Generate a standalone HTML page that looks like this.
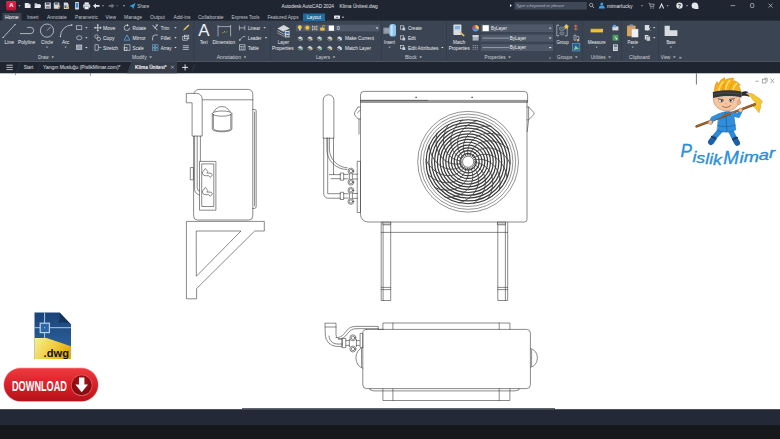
<!DOCTYPE html>
<html lang="tr"><head><meta charset="utf-8"><title>Klima Ünitesi.dwg - Autodesk AutoCAD 2024</title>
<style>html,body{margin:0;padding:0;background:#fff;overflow:hidden}svg{display:block}</style></head>
<body>
<svg width="780" height="439" viewBox="0 0 780 439" font-family="Liberation Sans, Arial, sans-serif">
<rect width="780" height="439" fill="#ffffff"/>
<rect x="0" y="0" width="780" height="21" fill="#1f2531"/>
<rect x="0" y="20.6" width="780" height="40.700" fill="#3b4453"/>
<rect x="0" y="61.300" width="780" height="12" fill="#1f2531"/>
<rect x="2.5" y="13" width="19" height="8" fill="#3b4453"/>
<rect x="303" y="13.5" width="22" height="7.500" fill="#1d6ba3"/>
<defs><linearGradient id="ga" x1="0" y1="0" x2="0" y2="1"><stop offset="0" stop-color="#e0244c"/><stop offset="0.7" stop-color="#cf173f"/><stop offset="1" stop-color="#8e1533"/></linearGradient></defs>
<rect x="6.2" y="1" width="9.800" height="9.800" rx="1" fill="url(#ga)"/>
<text x="11.3" y="7.3" font-size="6" fill="#ffffff" text-anchor="middle" font-weight="bold">A</text>
<path d="M18.4 5.45h2.2l-1.1 1.1z" fill="#eceef1"/>
<path d="M24.8 3h3.6l2.2 1.6v3.4h-5.800z" fill="#e6e8ec"/><path d="M28.400 3v1.600h2.200" fill="none" stroke="#8a909a" stroke-width="0.3"/>
<path d="M34.600 3.200h2.200l0.600 0.800h3v4h-5.800z" fill="#c8ccd2"/><path d="M35.600 5h5.600l-1 3h-5.600z" fill="#e6e8ec"/>
<rect x="44.800" y="2.600" width="6" height="6.200" rx="0.500" fill="#d4d8de"/><rect x="46" y="2.600" width="3.600" height="2.200" fill="#5b6270"/><rect x="46" y="6" width="3.600" height="2.800" fill="#8a909a"/>
<rect x="53.800" y="2.600" width="5.600" height="6.200" rx="0.500" fill="#d4d8de"/><rect x="54.800" y="2.600" width="3.400" height="2" fill="#5b6270"/><path d="M57 8.800l3-3.400 0.800 0.700-3 3.400z" fill="#e39a3a"/>
<path d="M63.800 2.600h3.400l1.400 1.400v5h-4.800z" fill="#d4d8de"/><rect x="64.600" y="5.400" width="2" height="2.600" fill="#5b6270"/><rect x="66.400" y="6.800" width="2.600" height="2" fill="#e3b23a"/>
<rect x="75" y="2" width="4" height="7.400" rx="0.700" fill="#d4d8de"/><rect x="75.700" y="3" width="2.600" height="4.600" fill="#3a86c8"/>
<rect x="83.200" y="4.200" width="7" height="3.600" rx="0.800" fill="#d4d8de"/><rect x="84.600" y="2.400" width="4.200" height="2" fill="#eef0f3"/><rect x="84.600" y="6.600" width="4.200" height="2.600" fill="#eef0f3" stroke="#5b6270" stroke-width="0.300"/>
<path d="M93 5.8l3-2.4v1.6h3.6v1.8h-3.6v1.6z" fill="#e3e6ea"/>
<path d="M102 5.5h2l-1 1z" fill="#eceef1"/>
<path d="M114.5 5.8l-3-2.4v1.6h-2.8v1.8h2.8v1.6z" fill="#6d7480"/>
<path d="M116.3 5.5h2l-1 1z" fill="#8a909a"/>
<path d="M122.8 5.4h2.4l-1.2 1.2z" fill="#eceef1"/>
<path d="M129.3 6.2l6.2-3.2-2.2 6-1.3-2.2z" fill="#2ea3e6"/>
<text x="137.3" y="7.6" font-size="5.4" fill="#c9cdd3" textLength="12" lengthAdjust="spacingAndGlyphs">Share</text>
<text x="281.5" y="8.1" font-size="5.4" fill="#e3e6ea" textLength="52.5" lengthAdjust="spacingAndGlyphs">Autodesk AutoCAD 2024</text>
<text x="339.5" y="8.1" font-size="5.4" fill="#e3e6ea" textLength="38.3" lengthAdjust="spacingAndGlyphs">Klima Ünitesi.dwg</text>
<path d="M510 4l1.8 1.6-1.8 1.6z" fill="#e3e6ea"/>
<rect x="514.5" y="2" width="72.3" height="7.6" fill="#3f4857"/>
<text x="516" y="7.4" font-size="4.3" fill="#b9bec6" font-style="italic" textLength="48" lengthAdjust="spacingAndGlyphs">Type a keyword or phrase</text>
<circle cx="591.2" cy="5" r="1.7" fill="none" stroke="#d9dce1" stroke-width="0.6"/><path d="M592.4 6.2l1.6 1.8" stroke="#d9dce1" stroke-width="0.7"/>
<circle cx="601.8" cy="4" r="1.5" fill="#3aa0e8"/><path d="M598.8 8.6q0-3 3-3t3 3z" fill="#3aa0e8"/>
<text x="607" y="7.8" font-size="4.6" fill="#e3e6ea" textLength="25.6" lengthAdjust="spacingAndGlyphs">mimarlucky</text>
<path d="M641 5.5h2l-1 1z" fill="#eceef1"/>
<path d="M648.6 3.2h1l0.8 3.4h3.2l0.6-2.4h-4" fill="none" stroke="#d9dce1" stroke-width="0.6"/><circle cx="650.9" cy="8" r="0.55" fill="#d9dce1"/><circle cx="653.2" cy="8" r="0.55" fill="#d9dce1"/>
<path d="M659 8.4l2.6-5.6 2.6 5.6h-1.2l-1.4-3.2-1.4 3.2z" fill="#e3e6ea"/>
<path d="M666.7 5.5h2l-1 1z" fill="#eceef1"/>
<circle cx="679.5" cy="5.6" r="3.2" fill="#e3e6ea"/>
<text x="679.5" y="7.5" font-size="5.4" fill="#1f2531" text-anchor="middle" font-weight="bold">?</text>
<path d="M686 5.5h2l-1 1z" fill="#eceef1"/>
<circle cx="694.8" cy="5.6" r="3.2" fill="#e3e6ea"/><rect x="695" y="5.4" width="3.4" height="3.6" fill="#e3e6ea"/>
<path d="M730.6 5.6h4.6" stroke="#e3e6ea" stroke-width="0.6"/>
<rect x="750.6" y="3.6" width="3.2" height="3.8" rx="0.6" fill="none" stroke="#e3e6ea" stroke-width="0.6"/>
<path d="M768.6 3.6l4 4m0-4l-4 4" stroke="#e3e6ea" stroke-width="0.6"/>
<text x="5" y="18.9" font-size="5.4" fill="#ffffff" textLength="13.7" lengthAdjust="spacingAndGlyphs">Home</text>
<text x="27" y="18.9" font-size="5.4" fill="#c3c8cf" textLength="11.5" lengthAdjust="spacingAndGlyphs">Insert</text>
<text x="47" y="18.9" font-size="5.4" fill="#c3c8cf" textLength="19.7" lengthAdjust="spacingAndGlyphs">Annotate</text>
<text x="75" y="18.9" font-size="5.4" fill="#c3c8cf" textLength="23" lengthAdjust="spacingAndGlyphs">Parametric</text>
<text x="105.6" y="18.9" font-size="5.4" fill="#c3c8cf" textLength="10.4" lengthAdjust="spacingAndGlyphs">View</text>
<text x="124" y="18.9" font-size="5.4" fill="#c3c8cf" textLength="18" lengthAdjust="spacingAndGlyphs">Manage</text>
<text x="150" y="18.9" font-size="5.4" fill="#c3c8cf" textLength="15" lengthAdjust="spacingAndGlyphs">Output</text>
<text x="173.6" y="18.9" font-size="5.4" fill="#c3c8cf" textLength="17" lengthAdjust="spacingAndGlyphs">Add-ins</text>
<text x="198" y="18.9" font-size="5.4" fill="#c3c8cf" textLength="25.6" lengthAdjust="spacingAndGlyphs">Collaborate</text>
<text x="231.5" y="18.9" font-size="5.4" fill="#c3c8cf" textLength="28" lengthAdjust="spacingAndGlyphs">Express Tools</text>
<text x="267.4" y="18.9" font-size="5.4" fill="#c3c8cf" textLength="31.3" lengthAdjust="spacingAndGlyphs">Featured Apps</text>
<text x="307" y="18.9" font-size="5.4" fill="#ffffff" textLength="14" lengthAdjust="spacingAndGlyphs">Layout</text>
<rect x="334" y="15.6" width="6" height="3.2" rx="0.5" fill="#e3e6ea"/><rect x="335.8" y="16.9" width="2.4" height="0.7" fill="#3b4453"/>
<path d="M341.75 16.775h2.5l-1.25 1.25z" fill="#eceef1"/>
<rect x="90.5" y="21.5" width="0.6" height="39" fill="#313948"/>
<rect x="193.6" y="21.5" width="0.6" height="39" fill="#313948"/>
<rect x="270" y="21.5" width="0.6" height="39" fill="#313948"/>
<rect x="381" y="21.5" width="0.6" height="39" fill="#313948"/>
<rect x="446" y="21.5" width="0.6" height="39" fill="#313948"/>
<rect x="553.5" y="21.5" width="0.6" height="39" fill="#313948"/>
<rect x="582.5" y="21.5" width="0.6" height="39" fill="#313948"/>
<rect x="621" y="21.5" width="0.6" height="39" fill="#313948"/>
<rect x="658" y="21.5" width="0.6" height="39" fill="#313948"/>
<text x="37.9" y="58.6" font-size="5.4" fill="#cfd3d9" textLength="10.8" lengthAdjust="spacingAndGlyphs">Draw</text>
<path d="M51.300000000000004 56.599999999999994h2.8l-1.4 1.4z" fill="#cfd3d9"/>
<text x="132" y="58.6" font-size="5.4" fill="#cfd3d9" textLength="14.7" lengthAdjust="spacingAndGlyphs">Modify</text>
<path d="M149.29999999999998 56.599999999999994h2.8l-1.4 1.4z" fill="#cfd3d9"/>
<text x="216.7" y="58.6" font-size="5.4" fill="#cfd3d9" textLength="24.3" lengthAdjust="spacingAndGlyphs">Annotation</text>
<path d="M243.6 56.599999999999994h2.8l-1.4 1.4z" fill="#cfd3d9"/>
<text x="315.9" y="58.6" font-size="5.4" fill="#cfd3d9" textLength="14.1" lengthAdjust="spacingAndGlyphs">Layers</text>
<path d="M332.6 56.599999999999994h2.8l-1.4 1.4z" fill="#cfd3d9"/>
<text x="405" y="58.6" font-size="5.4" fill="#cfd3d9" textLength="11.7" lengthAdjust="spacingAndGlyphs">Block</text>
<path d="M419.3 56.599999999999994h2.8l-1.4 1.4z" fill="#cfd3d9"/>
<text x="484.6" y="58.6" font-size="5.4" fill="#cfd3d9" textLength="21" lengthAdjust="spacingAndGlyphs">Properties</text>
<path d="M508.20000000000005 56.599999999999994h2.8l-1.4 1.4z" fill="#cfd3d9"/>
<text x="557" y="58.6" font-size="5.4" fill="#cfd3d9" textLength="15.3" lengthAdjust="spacingAndGlyphs">Groups</text>
<path d="M574.9 56.599999999999994h2.8l-1.4 1.4z" fill="#cfd3d9"/>
<text x="590.8" y="58.6" font-size="5.4" fill="#cfd3d9" textLength="14.8" lengthAdjust="spacingAndGlyphs">Utilities</text>
<path d="M608.1999999999999 56.599999999999994h2.8l-1.4 1.4z" fill="#cfd3d9"/>
<text x="629" y="58.6" font-size="5.4" fill="#cfd3d9" textLength="20.7" lengthAdjust="spacingAndGlyphs">Clipboard</text>
<text x="660.8" y="58.6" font-size="5.4" fill="#cfd3d9" textLength="9.5" lengthAdjust="spacingAndGlyphs">View</text>
<path d="M672.9 56.599999999999994h2.8l-1.4 1.4z" fill="#cfd3d9"/>
<text x="679" y="58.8" font-size="4.6" fill="#cfd3d9">»</text>
<text x="549" y="59" font-size="3.6" fill="#cfd3d9" transform="rotate(45 550 58)">»</text>
<path d="M3.2 37.4L15 24.6" stroke="#dfe2e6" stroke-width="0.7"/><circle cx="3.2" cy="37.4" r="0.7" fill="#dfe2e6"/><circle cx="15" cy="24.6" r="0.7" fill="#dfe2e6"/>
<text x="4.6" y="44.1" font-size="5.4" fill="#eceef1" textLength="9.4" lengthAdjust="spacingAndGlyphs">Line</text>
<path d="M20 33.6h10.6a3.1 3.1 0 0 0 0-6.2h-3.4" fill="none" stroke="#dfe2e6" stroke-width="0.7"/>
<text x="18" y="44.1" font-size="5.4" fill="#eceef1" textLength="17.2" lengthAdjust="spacingAndGlyphs">Polyline</text>
<circle cx="47" cy="30.6" r="6.6" fill="none" stroke="#dfe2e6" stroke-width="0.7"/><path d="M47 30.6l3.6-3.6" stroke="#dfe2e6" stroke-width="0.6"/>
<text x="41" y="44.1" font-size="5.4" fill="#eceef1" textLength="12" lengthAdjust="spacingAndGlyphs">Circle</text>
<path d="M45.9 46.650000000000006h2.2l-1.1 1.1z" fill="#eceef1"/>
<path d="M60.4 36.6a11.6 11.6 0 0 1 11.4-11.6" fill="none" stroke="#dfe2e6" stroke-width="0.7"/><circle cx="60.4" cy="36.6" r="0.7" fill="#dfe2e6"/><circle cx="71.8" cy="25" r="0.7" fill="#dfe2e6"/>
<text x="62" y="44.1" font-size="5.4" fill="#eceef1" textLength="7.2" lengthAdjust="spacingAndGlyphs">Arc</text>
<path d="M64.5 46.650000000000006h2.2l-1.1 1.1z" fill="#eceef1"/>
<rect x="76.6" y="25.8" width="5.2" height="3.8" fill="none" stroke="#dfe2e6" stroke-width="0.6"/>
<ellipse cx="79.2" cy="37.8" rx="2.7" ry="2" fill="none" stroke="#dfe2e6" stroke-width="0.6"/>
<rect x="76.6" y="45" width="5.2" height="4.6" fill="#8f96a1" stroke="#dfe2e6" stroke-width="0.6"/>
<path d="M85.15 27.275h2.5l-1.25 1.25z" fill="#eceef1"/>
<path d="M85.15 37.275h2.5l-1.25 1.25z" fill="#eceef1"/>
<path d="M85.15 46.875h2.5l-1.25 1.25z" fill="#eceef1"/>
<path d="M97.8 24.8v6m-3-3h6" stroke="#dfe2e6" stroke-width="0.8"/><path d="M97.8 24l1.2 1.4h-2.4zM97.8 31.6l1.2-1.4h-2.4zM94 27.8l1.4-1.2v2.4zM101.6 27.8l-1.4-1.2v2.4z" fill="#dfe2e6"/>
<circle cx="96.4" cy="36.4" r="1.7" fill="none" stroke="#dfe2e6" stroke-width="0.6"/><circle cx="98.8" cy="39" r="1.7" fill="none" stroke="#dfe2e6" stroke-width="0.6"/>
<rect x="95" y="44.8" width="3.2" height="5.4" fill="none" stroke="#dfe2e6" stroke-width="0.6"/><path d="M98.4 47.4h3" stroke="#dfe2e6" stroke-width="0.6"/>
<text x="103" y="29.8" font-size="5.4" fill="#eceef1" textLength="12.4" lengthAdjust="spacingAndGlyphs">Move</text>
<text x="103" y="39.7" font-size="5.4" fill="#eceef1" textLength="11.5" lengthAdjust="spacingAndGlyphs">Copy</text>
<text x="103" y="49.5" font-size="5.4" fill="#eceef1" textLength="15" lengthAdjust="spacingAndGlyphs">Stretch</text>
<path d="M129.6 27.8a2.7 2.7 0 1 1 -2-2.6" fill="none" stroke="#dfe2e6" stroke-width="0.7"/><path d="M127 24l1.8 1.2-1.8 1.2z" fill="#dfe2e6"/>
<path d="M124.2 40.2l2.8-5.2 2.8 5.2z" fill="none" stroke="#58b7f0" stroke-width="0.7"/>
<rect x="124.2" y="44.8" width="5.8" height="5.4" fill="none" stroke="#dfe2e6" stroke-width="0.6"/><rect x="124.2" y="47.6" width="2.8" height="2.6" fill="none" stroke="#dfe2e6" stroke-width="0.6"/>
<text x="132.6" y="29.8" font-size="5.4" fill="#eceef1" textLength="13.6" lengthAdjust="spacingAndGlyphs">Rotate</text>
<text x="132.6" y="39.7" font-size="5.4" fill="#eceef1" textLength="13" lengthAdjust="spacingAndGlyphs">Mirror</text>
<text x="132.6" y="49.5" font-size="5.4" fill="#eceef1" textLength="11" lengthAdjust="spacingAndGlyphs">Scale</text>
<path d="M152.6 25.2l4.8 5m0-5l-3 3.2" stroke="#dfe2e6" stroke-width="0.9"/><path d="M155.6 25h2.4" stroke="#dfe2e6" stroke-width="0.8"/>
<path d="M152.6 40.4v-2.6a2.8 2.8 0 0 1 2.8-2.8h2.4" fill="none" stroke="#dfe2e6" stroke-width="0.7"/>
<rect x="152.4" y="44.8" width="2.4" height="2.4" fill="none" stroke="#7fc2f0" stroke-width="0.5"/>
<rect x="152.4" y="48.0" width="2.4" height="2.4" fill="none" stroke="#7fc2f0" stroke-width="0.5"/>
<rect x="155.6" y="44.8" width="2.4" height="2.4" fill="none" stroke="#7fc2f0" stroke-width="0.5"/>
<rect x="155.6" y="48.0" width="2.4" height="2.4" fill="none" stroke="#7fc2f0" stroke-width="0.5"/>
<text x="160.8" y="29.8" font-size="5.4" fill="#eceef1" textLength="8.4" lengthAdjust="spacingAndGlyphs">Trim</text>
<text x="160.8" y="39.7" font-size="5.4" fill="#eceef1" textLength="9.8" lengthAdjust="spacingAndGlyphs">Fillet</text>
<text x="160.8" y="49.5" font-size="5.4" fill="#eceef1" textLength="10.6" lengthAdjust="spacingAndGlyphs">Array</text>
<path d="M174.25 27.275h2.5l-1.25 1.25z" fill="#eceef1"/>
<path d="M174.25 37.275h2.5l-1.25 1.25z" fill="#eceef1"/>
<path d="M174.25 46.875h2.5l-1.25 1.25z" fill="#eceef1"/>
<path d="M183 30.6l1-1.8 4.4-4.2 1 1-4.4 4.2z" fill="#e9c46a"/>
<rect x="182.8" y="36.6" width="4.4" height="3.6" fill="none" stroke="#dfe2e6" stroke-width="0.6"/><rect x="184.4" y="35.2" width="4.4" height="3.6" fill="none" stroke="#dfe2e6" stroke-width="0.6"/>
<path d="M182.8 45.8h6m-6 1.8h6m-6 1.8h6" stroke="#dfe2e6" stroke-width="0.7"/>
<text x="203.8" y="36.4" font-size="17" fill="#eef0f3" text-anchor="middle">A</text>
<text x="200" y="44.1" font-size="5.4" fill="#eceef1" textLength="7.6" lengthAdjust="spacingAndGlyphs">Text</text>
<path d="M218 25v11.4m12.6-11.4v11.4M218 26.6h12.6" stroke="#dfe2e6" stroke-width="0.6" fill="none"/>
<path d="M222.4 33.4l1-1.4m1.2 0.4v-1.6m1.4 1.8l1-1.2" stroke="#f2d23c" stroke-width="0.6"/>
<text x="212.5" y="44.1" font-size="5.4" fill="#eceef1" textLength="22.6" lengthAdjust="spacingAndGlyphs">Dimension</text>
<path d="M239.4 25.4v5m5.4-5v5m-5.4-2.5h5.4" stroke="#dfe2e6" stroke-width="0.6"/>
<path d="M239.6 40.2l3.4-3.6h2.4" fill="none" stroke="#dfe2e6" stroke-width="0.6"/><circle cx="239.8" cy="40" r="0.8" fill="#dfe2e6"/>
<rect x="239.4" y="44.8" width="5.6" height="5.2" fill="none" stroke="#dfe2e6" stroke-width="0.6"/><path d="M239.4 46.6h5.6M241.3 46.6v3.4m1.9-3.4v3.4" stroke="#dfe2e6" stroke-width="0.5"/>
<text x="248" y="29.8" font-size="5.4" fill="#eceef1" textLength="12.2" lengthAdjust="spacingAndGlyphs">Linear</text>
<text x="248" y="39.7" font-size="5.4" fill="#eceef1" textLength="13.4" lengthAdjust="spacingAndGlyphs">Leader</text>
<text x="248" y="49.5" font-size="5.4" fill="#eceef1" textLength="10.8" lengthAdjust="spacingAndGlyphs">Table</text>
<path d="M263.35 27.275h2.5l-1.25 1.25z" fill="#eceef1"/>
<path d="M264.75 37.275h2.5l-1.25 1.25z" fill="#eceef1"/>
<path d="M277.400 28.400l6.400-3.400 6 3.400-6.400 3.400z" fill="#d4d8de"/><path d="M277.400 30.600l6 3.400 6.400-3.400" fill="none" stroke="#b4bac3" stroke-width="0.9"/><path d="M277.400 32.800l6 3.400 6.400-3.400" fill="none" stroke="#9aa1ac" stroke-width="0.9"/><rect x="284.800" y="31" width="4.800" height="6.400" fill="#eef0f3" stroke="#5a6270" stroke-width="0.4"/><rect x="285.600" y="32" width="3.200" height="1.800" fill="#3a6fb0"/><rect x="285.600" y="34.800" width="3.200" height="1.800" fill="#5b6270"/>
<text x="277.7" y="44.4" font-size="5.4" fill="#eceef1" textLength="11.3" lengthAdjust="spacingAndGlyphs">Layer</text>
<text x="272" y="49.5" font-size="5.4" fill="#eceef1" textLength="21.6" lengthAdjust="spacingAndGlyphs">Properties</text>
<rect x="296" y="24.7" width="83.5" height="6.7" fill="#4f5868"/>
<circle cx="299.8" cy="27.2" r="1.9" fill="#f4cf4e"/><rect x="299" y="28.8" width="1.6" height="1.6" fill="#d9dce1"/>
<circle cx="307.3" cy="27.8" r="2" fill="#f4c03a"/><circle cx="307.3" cy="27.8" r="2.7" fill="none" stroke="#f4c03a" stroke-width="0.5" stroke-dasharray="0.7 0.9"/>
<path d="M312.600 25.600v5M316.800 25.600v5M312 26.600h5.400M312 29.600h5.400" fill="none" stroke="#c9cdd3" stroke-width="0.6"/><circle cx="314.7" cy="28.100" r="0.900" fill="#e9b84a"/>
<rect x="320.2" y="27.6" width="4.4" height="3" fill="#efbf4c"/><path d="M322.4 27.6v-1a1.200 1.200 0 0 1 2.400 0" fill="none" stroke="#efbf4c" stroke-width="0.7"/>
<rect x="328.7" y="25.5" width="5.3" height="5.3" fill="#ffffff"/>
<text x="336.8" y="29.8" font-size="5.4" fill="#eef0f3">0</text>
<path d="M375.6 27.5h2.8l-1.4 1.4z" fill="#eceef1"/>
<path d="M297.6 37.8l2.6-1.6 2.6 1.6-2.6 1.6z" fill="#c9cdd3"/><path d="M297.6 39.199999999999996l2.6 1.6 2.6-1.6" fill="none" stroke="#9aa1ac" stroke-width="0.6"/>
<rect x="300.8" y="38.199999999999996" width="1.9" height="2.1" fill="#7fc596"/>
<path d="M307.3 37.8l2.6-1.6 2.6 1.6-2.6 1.6z" fill="#c9cdd3"/><path d="M307.3 39.199999999999996l2.6 1.6 2.6-1.6" fill="none" stroke="#9aa1ac" stroke-width="0.6"/>
<rect x="310.5" y="38.199999999999996" width="1.9" height="2.1" fill="#d9c27a"/>
<path d="M316.8 37.8l2.6-1.6 2.6 1.6-2.6 1.6z" fill="#c9cdd3"/><path d="M316.8 39.199999999999996l2.6 1.6 2.6-1.6" fill="none" stroke="#9aa1ac" stroke-width="0.6"/>
<rect x="320.0" y="38.199999999999996" width="1.9" height="2.1" fill="#7fc596"/>
<path d="M327.1 37.8l2.6-1.6 2.6 1.6-2.6 1.6z" fill="#c9cdd3"/><path d="M327.1 39.199999999999996l2.6 1.6 2.6-1.6" fill="none" stroke="#9aa1ac" stroke-width="0.6"/>
<rect x="330.3" y="38.199999999999996" width="1.9" height="2.1" fill="#e3c268"/>
<path d="M336.8 37.8l2.6-1.6 2.6 1.6-2.6 1.6z" fill="#c9cdd3"/><path d="M336.8 39.199999999999996l2.6 1.6 2.6-1.6" fill="none" stroke="#9aa1ac" stroke-width="0.6"/>
<rect x="340.0" y="38.199999999999996" width="1.9" height="2.1" fill="#b9d4ea"/>
<path d="M297.6 47.4l2.6-1.6 2.6 1.6-2.6 1.6z" fill="#c9cdd3"/><path d="M297.6 48.8l2.6 1.6 2.6-1.6" fill="none" stroke="#9aa1ac" stroke-width="0.6"/>
<rect x="300.8" y="47.8" width="1.9" height="2.1" fill="#7fc596"/>
<path d="M307.3 47.4l2.6-1.6 2.6 1.6-2.6 1.6z" fill="#c9cdd3"/><path d="M307.3 48.8l2.6 1.6 2.6-1.6" fill="none" stroke="#9aa1ac" stroke-width="0.6"/>
<rect x="310.5" y="47.8" width="1.9" height="2.1" fill="#d9c27a"/>
<path d="M316.8 47.4l2.6-1.6 2.6 1.6-2.6 1.6z" fill="#c9cdd3"/><path d="M316.8 48.8l2.6 1.6 2.6-1.6" fill="none" stroke="#9aa1ac" stroke-width="0.6"/>
<rect x="320.0" y="47.8" width="1.9" height="2.1" fill="#7fc596"/>
<path d="M327.1 47.4l2.6-1.6 2.6 1.6-2.6 1.6z" fill="#c9cdd3"/><path d="M327.1 48.8l2.6 1.6 2.6-1.6" fill="none" stroke="#9aa1ac" stroke-width="0.6"/>
<rect x="330.3" y="47.8" width="1.9" height="2.1" fill="#e3c268"/>
<path d="M336.8 47.4l2.6-1.6 2.6 1.6-2.6 1.6z" fill="#c9cdd3"/><path d="M336.8 48.8l2.6 1.6 2.6-1.6" fill="none" stroke="#9aa1ac" stroke-width="0.6"/>
<rect x="340.0" y="47.8" width="1.9" height="2.1" fill="#b9d4ea"/>
<text x="345" y="39.7" font-size="5.4" fill="#eceef1" textLength="29" lengthAdjust="spacingAndGlyphs">Make Current</text>
<text x="345" y="49.5" font-size="5.4" fill="#eceef1" textLength="26" lengthAdjust="spacingAndGlyphs">Match Layer</text>
<rect x="383.2" y="27.4" width="8" height="6.600" rx="0.600" fill="#7b8491"/><rect x="384.200" y="28.400" width="6" height="4.400" fill="#98a0ac"/><rect x="389.400" y="24" width="6.600" height="12.600" rx="2.600" fill="#8fc4ee"/><rect x="390.600" y="25" width="2" height="10.600" rx="1" fill="#c7e2f7"/>
<text x="384" y="44.1" font-size="5.4" fill="#eceef1" textLength="11" lengthAdjust="spacingAndGlyphs">Insert</text>
<path d="M388.5 46.650000000000006h2.2l-1.1 1.1z" fill="#eceef1"/>
<rect x="400.4" y="25.8" width="3.4" height="3.4" fill="none" stroke="#dfe2e6" stroke-width="0.6"/><rect x="402.4" y="27.6" width="2.8" height="2.8" fill="#c9cdd3"/>
<rect x="400.4" y="35.8" width="3.4" height="3.4" fill="none" stroke="#dfe2e6" stroke-width="0.6"/><rect x="402.4" y="37.599999999999994" width="2.8" height="2.8" fill="#c9cdd3"/>
<rect x="400.4" y="45.4" width="3.4" height="3.4" fill="none" stroke="#dfe2e6" stroke-width="0.6"/><rect x="402.4" y="47.199999999999996" width="2.8" height="2.8" fill="#c9cdd3"/>
<text x="408" y="29.8" font-size="5.4" fill="#eceef1" textLength="13.8" lengthAdjust="spacingAndGlyphs">Create</text>
<text x="408" y="39.7" font-size="5.4" fill="#eceef1" textLength="7.8" lengthAdjust="spacingAndGlyphs">Edit</text>
<text x="408" y="49.5" font-size="5.4" fill="#eceef1" textLength="30.5" lengthAdjust="spacingAndGlyphs">Edit Attributes</text>
<path d="M441.05 46.875h2.5l-1.25 1.25z" fill="#eceef1"/>
<rect x="453.4" y="24.4" width="8" height="10.6" rx="0.8" fill="#d9dce1"/><rect x="454.8" y="26" width="5.2" height="3.4" fill="#7fb3e6"/><path d="M460.4 31.6l4.4 3.8-1.2 1.2-4-3.8z" fill="#e9c46a"/>
<text x="453" y="44.1" font-size="5.4" fill="#eceef1" textLength="12.4" lengthAdjust="spacingAndGlyphs">Match</text>
<text x="448.7" y="49.5" font-size="5.4" fill="#eceef1" textLength="21" lengthAdjust="spacingAndGlyphs">Properties</text>
<circle cx="475.6" cy="28.2" r="3.2" fill="#e04c4c"/><path d="M475.6 28.2L475.6 25A3.2 3.2 0 0 1 478.4 29.8z" fill="#f2d23c"/><path d="M475.6 28.2L478.4 29.8A3.2 3.2 0 0 1 472.8 29.8z" fill="#3aa0e8"/><path d="M475.6 28.2L472.8 29.8A3.2 3.2 0 0 1 473 26.4z" fill="#8e58c9"/>
<rect x="472.6" y="35.2" width="6" height="5.4" fill="#aab0ba"/><rect x="472.6" y="35.2" width="6" height="1.6" fill="#d9dce1"/>
<path d="M472.6 45.6h6m-6 1.8h6m-6 1.8h6" stroke="#aab0ba" stroke-width="0.7" stroke-dasharray="1.4 0.6"/>
<rect x="480.8" y="24.4" width="72.4" height="7.600000000000001" fill="#4f5868"/>
<path d="M548.8000000000001 27.7h2.8l-1.4 1.4z" fill="#eceef1"/>
<rect x="480.8" y="34.6" width="72.4" height="7.0" fill="#4f5868"/>
<path d="M548.8000000000001 37.6h2.8l-1.4 1.4z" fill="#eceef1"/>
<rect x="480.8" y="44.2" width="72.4" height="6.799999999999997" fill="#4f5868"/>
<path d="M548.8000000000001 47.1h2.8l-1.4 1.4z" fill="#eceef1"/>
<rect x="482.6" y="25.2" width="6.2" height="6" fill="#ffffff"/>
<text x="491" y="29.9" font-size="5.4" fill="#eef0f3" textLength="16" lengthAdjust="spacingAndGlyphs">ByLayer</text>
<path d="M482.6 38.1h26.6" stroke="#e3e6ea" stroke-width="0.5"/>
<text x="509.7" y="39.800000000000004" font-size="5.4" fill="#eef0f3" textLength="16.4" lengthAdjust="spacingAndGlyphs">ByLayer</text>
<path d="M482.6 47.6h26.6" stroke="#e3e6ea" stroke-width="0.5"/>
<text x="509.7" y="49.300000000000004" font-size="5.4" fill="#eef0f3" textLength="16.4" lengthAdjust="spacingAndGlyphs">ByLayer</text>
<path d="M558.6 26v-1h-1.8v11h1.8v-1M565.4 26v-1h1.8v11h-1.8v-1" fill="none" stroke="#d9dce1" stroke-width="0.6"/><rect x="559.4" y="27" width="5" height="3.4" rx="1" fill="#5b6778" stroke="#aab0ba" stroke-width="0.4"/><ellipse cx="561.9" cy="33.4" rx="2.2" ry="1.7" fill="#5b6778" stroke="#aab0ba" stroke-width="0.4"/>
<path d="M566.4 24l0.8 1.8 1.9 0.2-1.4 1.3 0.4 1.9-1.7-1-1.7 1 0.4-1.9-1.4-1.3 1.9-0.2z" fill="#f2c94c"/>
<text x="556.4" y="44.1" font-size="5.4" fill="#eceef1" textLength="12.3" lengthAdjust="spacingAndGlyphs">Group</text>
<path d="M575.8 24.6v6M574 26h3.6M574 29h3.6" stroke="#e0795a" stroke-width="0.8"/>
<path d="M574 35.2h2v5h-2zM576.8 36.4h2v4.6h-2" fill="none" stroke="#d9dce1" stroke-width="0.6"/><circle cx="578" cy="40" r="1" fill="#e9c46a"/>
<rect x="572.4" y="43.6" width="7.4" height="7.4" fill="#2d5f86" stroke="#56a8e6" stroke-width="0.6"/><path d="M574.2 49.6l1.4-3.6 3 2.8-1.6 0.2z" fill="#6fcf7c" stroke="#e3e6ea" stroke-width="0.3"/>
<rect x="590.6" y="28.8" width="12.4" height="3.6" fill="#f0c330"/><path d="M592 28.8v1.4m1.6-1.4v1.4m1.6-1.4v1.4m1.6-1.4v1.4m1.6-1.4v1.4m1.6-1.4v1.4" stroke="#8a6d10" stroke-width="0.3"/>
<text x="587.7" y="44.1" font-size="5.4" fill="#eceef1" textLength="18" lengthAdjust="spacingAndGlyphs">Measure</text>
<path d="M595.5 46.650000000000006h2.2l-1.1 1.1z" fill="#eceef1"/>
<rect x="612.4" y="26.4" width="6" height="4" fill="#d9dce1"/><rect x="613.2" y="24.8" width="2.6" height="2.6" fill="#5aa9e6"/>
<rect x="612.6" y="34.8" width="5.8" height="5.8" fill="#4b9f64"/><path d="M615 36l2.6 3.4-1.6 0.2z" fill="#ffffff"/>
<rect x="613" y="44.4" width="4.8" height="6.6" fill="#d9dce1"/><rect x="613.8" y="45.2" width="3.2" height="1.6" fill="#5b6778"/><path d="M613.8 48h3.2m-3.2 1.4h3.2" stroke="#5b6778" stroke-width="0.5"/>
<rect x="627" y="25.6" width="8.6" height="10.6" rx="0.8" fill="#d8a35e"/><rect x="629.4" y="24.4" width="3.8" height="2.4" rx="0.6" fill="#8f96a1"/><rect x="631.6" y="29" width="6.6" height="8.2" fill="#eef0f3" stroke="#9aa1ac" stroke-width="0.3"/>
<text x="627.4" y="44.1" font-size="5.4" fill="#eceef1" textLength="10.8" lengthAdjust="spacingAndGlyphs">Paste</text>
<path d="M631.6999999999999 46.650000000000006h2.2l-1.1 1.1z" fill="#eceef1"/>
<rect x="644.8" y="25" width="4.4" height="5.4" fill="#d9dce1"/><path d="M647.4 27.6l3 3m0-3l-3 3" stroke="#d9dce1" stroke-width="0.7"/>
<rect x="644.8" y="35" width="3.6" height="4.6" fill="#d9dce1"/><rect x="646.6" y="36.4" width="3.6" height="4.6" fill="#c3c8cf" stroke="#3b4453" stroke-width="0.3"/>
<path d="M652.95 27.275h2.5l-1.25 1.25z" fill="#eceef1"/>
<path d="M652.95 37.275h2.5l-1.25 1.25z" fill="#eceef1"/>
<path d="M664.6 25.8h5.2v4.4h7.6v5.8h-12.8z" fill="#d9dce1"/>
<text x="666.4" y="44.1" font-size="5.4" fill="#eceef1" textLength="9.2" lengthAdjust="spacingAndGlyphs">Base</text>
<path d="M669.9 46.650000000000006h2.2l-1.1 1.1z" fill="#eceef1"/>
<path d="M6.4 65.2h6.4m-6.4 2.2h6.4m-6.4 2.2h6.4" stroke="#eef0f3" stroke-width="0.7"/>
<path d="M127 73.300l4.600-12h45.600v12z" fill="#363e4c"/>
<path d="M17 72l3.4-9M37 72l3.4-9" stroke="#3b4453" stroke-width="0.5"/>
<text x="23.8" y="69" font-size="5.4" fill="#e3e6ea" textLength="9.5" lengthAdjust="spacingAndGlyphs">Start</text>
<text x="43" y="69" font-size="5.4" fill="#e3e6ea" textLength="77.5" lengthAdjust="spacingAndGlyphs">Yangın Musluğu (PislikMimar.com)*</text>
<text x="135" y="69" font-size="5.4" fill="#ffffff" font-weight="bold" textLength="31.7" lengthAdjust="spacingAndGlyphs">Klima Ünitesi*</text>
<path d="M171 65.8l2.8 2.8m0-2.8l-2.8 2.8" stroke="#e3e6ea" stroke-width="0.5"/>
<path d="M185.100 64.400v6m-3-3h6" stroke="#f4f5f7" stroke-width="0.900"/><path d="M192.600 70.400l1.800-6" stroke="#3b4453" stroke-width="0.600"/>
<rect x="0" y="409.2" width="780" height="16.3" fill="#232936"/>
<rect x="0" y="425" width="780" height="14" fill="#17181b"/>
<rect x="242" y="408.2" width="313" height="1.2" fill="#3a414e"/>
<path d="M15.500 73.500v1.600M90.500 73.500v2.200" stroke="#333" stroke-width="0.500"/>
<g fill="none" stroke="#4a4a4a" stroke-width="0.65" stroke-linejoin="round" stroke-linecap="round">
<path d="M193.6 99.8V216a4 4 0 0 0 4 4h51.2a4 4 0 0 0 4-4V94a4.6 4.6 0 0 0-4.6-4.6H199a5.4 5.4 0 0 0-5.4 5.4z"/>
<path d="M193.6 99.8h59.2"/>
<path d="M252.8 109.5h2a1.4 1.4 0 0 1 1.4 1.4v95.6a2 2 0 0 1-2 2h-1.4M254.6 112v94"/>
<path d="M186.7 93.4h10a5.5 5.5 0 0 1 5.5 5.5v37.2h-10.1v-33.3h-5.4z" fill="#ffffff"/>
<path d="M194.6 136.1v53a6 6 0 0 0 6 6h4M200.4 136.1v50.5M197.2 136.1v51.5a4 4 0 0 0 4 4h3" />
<circle cx="222" cy="115.4" r="8.9"/>
<path d="M212.3 113.6v15.4a9.8 2.8 0 0 0 19.6 0v-15.4a9.8 2.6 0 0 0-19.6 0a9.8 2.6 0 0 0 19.6 0" fill="#ffffff"/>
<path d="M213.4 114.4v14.4a8.7 2.2 0 0 0 17.4 0v-14.4"/>
<rect x="199.9" y="161.4" width="16" height="48.8" fill="#ffffff"/><rect x="202.1" y="163.9" width="11.7" height="42.6"/>
<rect x="190.7" y="167.5" width="2.7" height="12.3"/>
<path d="M203 171.5l2.4-3 2.4 3-1 1.6h4.2l1.4 1.8-2 2.4-1.8-1.6h-3.6a3 3 0 0 1-2.6-2.2z" fill="#ffffff"/>
<path d="M203 190.5l2.4-3 2.4 3-1 1.6h4.2l1.4 1.8-2 2.4-1.8-1.6h-3.6a3 3 0 0 1-2.6-2.2z" fill="#ffffff"/>
<path d="M186.8 221.4h77.5v9.6h-9.6L196.6 288.6v10.2h-9.8z"/>
<path d="M196.6 231h44.4L196.6 276z"/>
<path d="M360.5 101.4V214.5a7.5 7.5 0 0 0 7.500 7.500H524.400a2.600 2.600 0 0 0 2.600-2.600V101.4"/>
<path d="M360.5 101.8V94.8a3.4 3.4 0 0 1 3.4-3.4H524a3.6 3.6 0 0 1 3.6 3.6v6.8zM360.5 100.4h67.1"/>
<path d="M360.5 100.4h167.1M360.5 101.8h167.1"/>
<path d="M360.5 107h-2.6l-3.3 5.6v2.4l3.6 4h2.3M357.6 112.6l2.9-2.6M359 119v15"/>
<path d="M527 106.9h1.6l5.4 5.8v1.6l-5.4 5.6h-1.6M528.6 107v12.6l-1.4 12"/>
<circle cx="416" cy="97.3" r="0.5"/><circle cx="472" cy="97.3" r="0.5"/>
<path d="M323.2 137.9V100.1a5.35 5.35 0 0 1 10.7 0V137.9z"/>
<path d="M323.7 137.9V193.8a4.4 4.4 0 0 0 4.4 4.4h12.5M333.5 137.9V174.6M327.7 137.9V193.7h12.9M329.4 174.6h11.2M331 178.7h9.6"/>
<path d="M326.9 137.9v12a20 20 0 0 0 20 19.6M329.4 137.9v11a19 19 0 0 0 18 19"/>
<rect x="340.6" y="173.0" width="3.1" height="7.2"/><path d="M343.7 174.4h4.4M343.7 178.79999999999998h4.4"/>
<path d="M349.4 172.6v8h3v-8z" fill="#ffffff"/>
<circle cx="350.9" cy="171.0" r="2.9" fill="#ffffff"/><circle cx="350.9" cy="182.2" r="2.900" fill="#ffffff"/><circle cx="350.9" cy="171.0" r="1.700"/><circle cx="350.9" cy="182.2" r="1.700"/>
<path d="M353.2 174.2h4.4M353.2 179.0h4.4"/>
<rect x="340.6" y="192.3" width="3.1" height="7.2"/><path d="M343.7 193.70000000000002h4.4M343.7 198.1h4.4"/>
<path d="M349.4 191.9v8h3v-8z" fill="#ffffff"/>
<circle cx="350.9" cy="190.3" r="2.9" fill="#ffffff"/><circle cx="350.9" cy="201.5" r="2.900" fill="#ffffff"/><circle cx="350.9" cy="190.3" r="1.700"/><circle cx="350.9" cy="201.5" r="1.700"/>
<path d="M353.2 193.5h4.4M353.2 198.3h4.4"/>
<rect x="357.6" y="161.3" width="2.9" height="51.2"/>
<path d="M381.2 222.2V300.5h9.5V222.2M383.1 222.2V300.5M381.2 232.4H507.7M381.2 287.4h9.5M381.2 289.6h9.5"/>
<path d="M497.8 222.2V300.5h9.9V222.2M505.4 222.2V300.5M497.8 287.4h9.9M497.8 289.6h9.9"/>
<rect x="383.1" y="222.2" width="7.6" height="2.6" fill="#d0d0d0"/><rect x="497.8" y="222.2" width="7.6" height="2.6" fill="#d0d0d0"/>
</g>
<g fill="none" stroke="#4a4a4a">
<circle cx="468.1" cy="161.75" r="50.4" stroke-width="0.6"/>
<circle cx="468.1" cy="161.75" r="47.6" stroke-width="0.6"/>
<circle cx="468.1" cy="161.75" r="44.8" stroke-width="0.6"/>
</g>
<g fill="none" stroke="#383838" stroke-width="1.2">
<circle cx="468.1" cy="161.75" r="42.00"/>
<circle cx="468.1" cy="161.75" r="39.19"/>
<circle cx="468.1" cy="161.75" r="36.38"/>
<circle cx="468.1" cy="161.75" r="33.57"/>
<circle cx="468.1" cy="161.75" r="30.76"/>
<circle cx="468.1" cy="161.75" r="27.95"/>
<circle cx="468.1" cy="161.75" r="25.14"/>
<circle cx="468.1" cy="161.75" r="22.33"/>
<circle cx="468.1" cy="161.75" r="19.52"/>
<circle cx="468.1" cy="161.75" r="16.71"/>
<circle cx="468.1" cy="161.75" r="13.90"/>
<circle cx="468.1" cy="161.75" r="11.09"/>
<circle cx="468.1" cy="161.75" r="8.28"/>
</g>
<g fill="none" stroke="#3c3c3c" stroke-width="0.85" stroke-linejoin="round">
<path d="M475.1 162.4 L476.2 162.6 L477.4 162.8 L478.5 163.1 L479.7 163.5 L480.8 163.9 L481.9 164.4 L483.0 165.0 L484.1 165.6 L485.1 166.4 L486.1 167.2 L487.1 168.1 L488.0 169.1 L488.8 170.1 L489.6 171.3 L490.3 172.6 L490.9 173.9 L491.5 175.3 L492.0 176.9 L492.3 178.5 L492.6 180.1 L492.7 181.9 L492.7 183.7 L492.6 185.5 L492.3 187.5 L491.9 189.4 L491.3 191.4 L490.6 193.4 L489.7 195.5 L488.6 197.5 L487.3 199.5"/>
<path d="M474.4 164.8 L475.4 165.3 L476.5 166.0 L477.4 166.6 L478.4 167.3 L479.3 168.1 L480.2 169.0 L481.0 169.9 L481.8 170.9 L482.5 171.9 L483.2 173.0 L483.7 174.2 L484.3 175.4 L484.7 176.7 L485.0 178.1 L485.3 179.5 L485.4 181.0 L485.4 182.5 L485.3 184.1 L485.1 185.7 L484.8 187.4 L484.3 189.1 L483.7 190.8 L483.0 192.5 L482.1 194.2 L481.0 195.9 L479.8 197.6 L478.4 199.2 L476.8 200.8 L475.1 202.4 L473.2 203.8"/>
<path d="M473.0 166.8 L473.8 167.6 L474.5 168.6 L475.2 169.5 L475.9 170.5 L476.5 171.6 L477.0 172.7 L477.5 173.8 L477.9 175.0 L478.2 176.2 L478.4 177.5 L478.6 178.8 L478.6 180.1 L478.6 181.5 L478.4 182.9 L478.2 184.3 L477.8 185.8 L477.3 187.2 L476.7 188.7 L475.9 190.1 L475.0 191.6 L474.0 193.0 L472.9 194.4 L471.6 195.7 L470.1 197.0 L468.5 198.2 L466.8 199.4 L464.9 200.5 L462.9 201.5 L460.8 202.3 L458.5 203.1"/>
<path d="M471.0 168.1 L471.4 169.2 L471.8 170.3 L472.1 171.5 L472.4 172.7 L472.6 173.8 L472.7 175.1 L472.8 176.3 L472.7 177.5 L472.6 178.8 L472.4 180.0 L472.1 181.3 L471.7 182.6 L471.2 183.9 L470.6 185.1 L469.8 186.4 L469.0 187.6 L468.0 188.8 L466.9 190.0 L465.7 191.1 L464.4 192.1 L463.0 193.1 L461.4 194.0 L459.7 194.8 L457.9 195.6 L456.0 196.2 L454.0 196.7 L451.9 197.1 L449.7 197.3 L447.4 197.4 L445.0 197.3"/>
<path d="M468.6 168.7 L468.7 169.9 L468.6 171.1 L468.6 172.3 L468.4 173.5 L468.2 174.6 L467.9 175.8 L467.5 177.0 L467.1 178.2 L466.5 179.3 L465.9 180.4 L465.2 181.5 L464.3 182.6 L463.4 183.6 L462.4 184.6 L461.3 185.5 L460.1 186.4 L458.8 187.2 L457.4 187.9 L455.8 188.5 L454.2 189.0 L452.6 189.5 L450.8 189.8 L448.9 190.0 L447.0 190.1 L445.0 190.0 L442.9 189.8 L440.8 189.4 L438.6 188.9 L436.4 188.1 L434.2 187.3"/>
<path d="M466.2 168.5 L465.8 169.6 L465.4 170.7 L464.9 171.8 L464.4 172.9 L463.8 173.9 L463.1 174.9 L462.3 175.9 L461.5 176.8 L460.6 177.7 L459.6 178.5 L458.6 179.3 L457.4 180.0 L456.2 180.7 L454.9 181.3 L453.6 181.7 L452.2 182.1 L450.6 182.4 L449.1 182.6 L447.4 182.7 L445.8 182.7 L444.0 182.5 L442.2 182.2 L440.4 181.7 L438.6 181.1 L436.7 180.4 L434.8 179.5 L433.0 178.4 L431.1 177.1 L429.3 175.7 L427.5 174.1"/>
<path d="M464.0 167.4 L463.3 168.4 L462.5 169.3 L461.7 170.1 L460.8 170.9 L459.9 171.7 L458.9 172.4 L457.9 173.1 L456.8 173.7 L455.6 174.2 L454.4 174.6 L453.1 175.0 L451.8 175.3 L450.5 175.5 L449.1 175.6 L447.6 175.6 L446.1 175.4 L444.6 175.2 L443.1 174.9 L441.5 174.4 L439.9 173.7 L438.4 173.0 L436.8 172.1 L435.3 171.1 L433.7 169.9 L432.2 168.5 L430.8 167.0 L429.4 165.4 L428.1 163.6 L426.9 161.6 L425.8 159.5"/>
<path d="M462.3 165.7 L461.3 166.3 L460.3 166.9 L459.2 167.4 L458.1 167.9 L457.0 168.3 L455.8 168.6 L454.6 168.9 L453.4 169.1 L452.1 169.2 L450.8 169.2 L449.5 169.1 L448.2 168.9 L446.8 168.6 L445.5 168.2 L444.1 167.7 L442.8 167.1 L441.4 166.4 L440.1 165.5 L438.8 164.5 L437.5 163.4 L436.3 162.1 L435.2 160.8 L434.1 159.3 L433.0 157.6 L432.1 155.8 L431.2 153.9 L430.5 151.9 L429.9 149.8 L429.4 147.5 L429.1 145.2"/>
<path d="M461.3 163.5 L460.2 163.7 L459.0 163.9 L457.8 164.0 L456.6 164.1 L455.4 164.1 L454.2 164.0 L453.0 163.8 L451.8 163.6 L450.5 163.2 L449.3 162.8 L448.1 162.3 L446.9 161.7 L445.8 160.9 L444.6 160.1 L443.5 159.2 L442.5 158.1 L441.5 157.0 L440.5 155.7 L439.6 154.3 L438.8 152.8 L438.1 151.3 L437.5 149.6 L437.0 147.8 L436.6 145.9 L436.3 143.9 L436.1 141.8 L436.1 139.7 L436.3 137.4 L436.6 135.2 L437.1 132.8"/>
<path d="M461.1 161.1 L460.0 160.9 L458.8 160.7 L457.7 160.4 L456.5 160.0 L455.4 159.6 L454.3 159.1 L453.2 158.5 L452.1 157.9 L451.1 157.1 L450.1 156.3 L449.1 155.4 L448.2 154.4 L447.4 153.4 L446.6 152.2 L445.9 150.9 L445.3 149.6 L444.7 148.2 L444.2 146.6 L443.9 145.0 L443.6 143.4 L443.5 141.6 L443.5 139.8 L443.6 138.0 L443.9 136.0 L444.3 134.1 L444.9 132.1 L445.6 130.1 L446.5 128.0 L447.6 126.0 L448.9 124.0"/>
<path d="M461.8 158.7 L460.8 158.2 L459.7 157.5 L458.8 156.9 L457.8 156.2 L456.9 155.4 L456.0 154.5 L455.2 153.6 L454.4 152.6 L453.7 151.6 L453.0 150.5 L452.5 149.3 L451.9 148.1 L451.5 146.8 L451.2 145.4 L450.9 144.0 L450.8 142.5 L450.8 141.0 L450.9 139.4 L451.1 137.8 L451.4 136.1 L451.9 134.4 L452.5 132.7 L453.2 131.0 L454.1 129.3 L455.2 127.6 L456.4 125.9 L457.8 124.3 L459.4 122.7 L461.1 121.1 L463.0 119.7"/>
<path d="M463.2 156.7 L462.4 155.9 L461.7 154.9 L461.0 154.0 L460.3 153.0 L459.7 151.9 L459.2 150.8 L458.7 149.7 L458.3 148.5 L458.0 147.3 L457.8 146.0 L457.6 144.7 L457.6 143.4 L457.6 142.0 L457.8 140.6 L458.0 139.2 L458.4 137.7 L458.9 136.3 L459.5 134.8 L460.3 133.4 L461.2 131.9 L462.2 130.5 L463.3 129.1 L464.6 127.8 L466.1 126.5 L467.7 125.3 L469.4 124.1 L471.3 123.0 L473.3 122.0 L475.4 121.2 L477.7 120.4"/>
<path d="M465.2 155.4 L464.8 154.3 L464.4 153.2 L464.1 152.0 L463.8 150.8 L463.6 149.7 L463.5 148.4 L463.4 147.2 L463.5 146.0 L463.6 144.7 L463.8 143.5 L464.1 142.2 L464.5 140.9 L465.0 139.6 L465.6 138.4 L466.4 137.1 L467.2 135.9 L468.2 134.7 L469.3 133.5 L470.5 132.4 L471.8 131.4 L473.2 130.4 L474.8 129.5 L476.5 128.7 L478.3 127.9 L480.2 127.3 L482.2 126.8 L484.3 126.4 L486.5 126.2 L488.8 126.1 L491.2 126.2"/>
<path d="M467.6 154.8 L467.5 153.6 L467.6 152.4 L467.6 151.2 L467.8 150.0 L468.0 148.9 L468.3 147.7 L468.7 146.5 L469.1 145.3 L469.7 144.2 L470.3 143.1 L471.0 142.0 L471.9 140.9 L472.8 139.9 L473.8 138.9 L474.9 138.0 L476.1 137.1 L477.4 136.3 L478.8 135.6 L480.4 135.0 L482.0 134.5 L483.6 134.0 L485.4 133.7 L487.3 133.5 L489.2 133.4 L491.2 133.5 L493.3 133.7 L495.4 134.1 L497.6 134.6 L499.8 135.4 L502.0 136.2"/>
<path d="M470.0 155.0 L470.4 153.9 L470.8 152.8 L471.3 151.7 L471.8 150.6 L472.4 149.6 L473.1 148.6 L473.9 147.6 L474.7 146.7 L475.6 145.8 L476.6 145.0 L477.6 144.2 L478.8 143.5 L480.0 142.8 L481.3 142.2 L482.6 141.8 L484.0 141.4 L485.6 141.1 L487.1 140.9 L488.8 140.8 L490.4 140.8 L492.2 141.0 L494.0 141.3 L495.8 141.8 L497.6 142.4 L499.5 143.1 L501.4 144.0 L503.2 145.1 L505.1 146.4 L506.9 147.8 L508.7 149.4"/>
<path d="M472.2 156.1 L472.9 155.1 L473.7 154.2 L474.5 153.4 L475.4 152.6 L476.3 151.8 L477.3 151.1 L478.3 150.4 L479.4 149.8 L480.6 149.3 L481.8 148.9 L483.1 148.5 L484.4 148.2 L485.7 148.0 L487.1 147.9 L488.6 147.9 L490.1 148.1 L491.6 148.3 L493.1 148.6 L494.7 149.1 L496.3 149.8 L497.8 150.5 L499.4 151.4 L500.9 152.4 L502.5 153.6 L504.0 155.0 L505.4 156.5 L506.8 158.1 L508.1 159.9 L509.3 161.9 L510.4 164.0"/>
<path d="M473.9 157.8 L474.9 157.2 L475.9 156.6 L477.0 156.1 L478.1 155.6 L479.2 155.2 L480.4 154.9 L481.6 154.6 L482.8 154.4 L484.1 154.3 L485.4 154.3 L486.7 154.4 L488.0 154.6 L489.4 154.9 L490.7 155.3 L492.1 155.8 L493.4 156.4 L494.8 157.1 L496.1 158.0 L497.4 159.0 L498.7 160.1 L499.9 161.4 L501.0 162.7 L502.1 164.2 L503.2 165.9 L504.1 167.7 L505.0 169.6 L505.7 171.6 L506.3 173.7 L506.8 176.0 L507.1 178.3"/>
<path d="M474.9 160.0 L476.0 159.8 L477.2 159.6 L478.4 159.5 L479.6 159.4 L480.8 159.4 L482.0 159.5 L483.2 159.7 L484.4 159.9 L485.7 160.3 L486.9 160.7 L488.1 161.2 L489.3 161.8 L490.4 162.6 L491.6 163.4 L492.7 164.3 L493.7 165.4 L494.7 166.5 L495.7 167.8 L496.6 169.2 L497.4 170.7 L498.1 172.2 L498.7 173.9 L499.2 175.7 L499.6 177.6 L499.9 179.6 L500.1 181.7 L500.1 183.8 L499.9 186.1 L499.6 188.3 L499.1 190.7"/>
</g>
<circle cx="468.1" cy="161.75" r="5.6" fill="#ffffff" stroke="#4a4a4a" stroke-width="0.7"/>
<circle cx="468.1" cy="161.75" r="7" fill="none" stroke="#3c3c3c" stroke-width="1.6" stroke-dasharray="0.9 0.95"/>
<g fill="none" stroke="#4a4a4a" stroke-width="0.65" stroke-linejoin="round" stroke-linecap="round">
<rect x="383.3" y="323" width="126.6" height="77.5"/>
<path d="M392.9 323v77.5M499.2 323v77.5"/>
<rect x="362.8" y="329.4" width="167.6" height="59.2" rx="3.8" fill="#ffffff"/>
<path d="M370 388.6v1.2l4 1.1h141l4-1.1v-1.2"/>
<path d="M362.8 347.6a8 10.4 0 0 0 0 20.6M530.4 348.7a7 9.2 0 0 1 0 18.4"/>
<path d="M361.5 349v18M531.6 350v16" stroke-dasharray="0.5 0.7"/>
<rect x="360.5" y="333.4" width="2.3" height="14.2"/>
<path d="M325.3 323.2h10.7v11.4a4.6 4.6 0 0 0 4.6 4.6h1.7v7.2h-5.6a11.4 11.4 0 0 1-11.4-11.4z"/>
<path d="M325.3 327h10.7M329 336a8 8 0 0 0 8 8h5.3"/>
<rect x="342.3" y="338.5" width="3.5" height="9.1"/>
<path d="M345.8 340.6h3.6M345.8 345.4h3.6M356.4 340.6h3M356.4 345.4h3"/>
<path d="M349.4 339.4v7.2M356.4 339.4v7.2"/>
<circle cx="352.9" cy="337.8" r="3" fill="#ffffff"/><circle cx="352.9" cy="349" r="3" fill="#ffffff"/><circle cx="352.9" cy="337.8" r="1.7"/><circle cx="352.9" cy="349" r="1.7"/>
<path d="M336 337.6c5 0 7-2 9.400-5.400s5.400-5.800 10-5.800h22.800v3M338.400 339.200c4.400-0.400 6.800-2.200 9-5.400s4.800-5.100 8.600-5.100h22.300M378.700 329.400h4.600"/>
</g>
<path d="M696.4 73.5V84.5" stroke="#3a3a3a" stroke-width="0.7"/>
<g stroke="#8a8a8a" stroke-width="0.7" fill="none"><path d="M755.4 81.2h3.4"/><rect x="762.6" y="79.2" width="3.4" height="3.8"/><path d="M764 78.2h3.2v3.6"/><path d="M770.6 78.6l3.6 4.4m0-4.4l-3.6 4.4"/></g>
<defs><linearGradient id="gb" x1="0" y1="0" x2="0" y2="1"><stop offset="0" stop-color="#1b4478"/><stop offset="1" stop-color="#3068a6"/></linearGradient><linearGradient id="gy" x1="0" y1="0" x2="1" y2="0.4"><stop offset="0" stop-color="#f8ee9c"/><stop offset="0.6" stop-color="#f0cf3a"/><stop offset="1" stop-color="#e3ae12"/></linearGradient><linearGradient id="gr" x1="0" y1="0" x2="0" y2="1"><stop offset="0" stop-color="#ee3a40"/><stop offset="0.55" stop-color="#d61f26"/><stop offset="1" stop-color="#b5121a"/></linearGradient><radialGradient id="gc" cx="0.5" cy="0.4" r="0.6"><stop offset="0" stop-color="#b0141a"/><stop offset="1" stop-color="#7d0a0f"/></radialGradient></defs>
<path d="M34.5 312.5H59.6L71 324.6V359H34.5z" fill="url(#gb)"/>
<path d="M34.5 338H46.6L71 346.2V359H34.5z" fill="url(#gy)"/>
<path d="M59.6 312.5c0.6 4 0.2 7.6-1.2 10.6c3.6-1.4 8.4-1 12.6 1.5z" fill="#16335c"/>
<path d="M44.6 312.5V338M34.5 327.7H71" stroke="#a9cbea" stroke-width="1"/>
<rect x="40.2" y="323.2" width="9.2" height="9.4" fill="#2f66a3" stroke="#b5d3ee" stroke-width="1.2"/><rect x="44.2" y="327.2" width="1" height="1" fill="#b5d3ee"/>
<text x="43.6" y="356.7" font-size="11.4" fill="#111111" font-weight="bold" textLength="25.4" lengthAdjust="spacingAndGlyphs">.dwg</text>
<rect x="3.4" y="367.6" width="95.2" height="34.2" rx="17.1" fill="#f3b9bb"/>
<rect x="4" y="368.2" width="94" height="33" rx="16.5" fill="url(#gr)"/>
<text x="12" y="391" font-size="14.2" fill="#ffffff" font-weight="bold" textLength="55" lengthAdjust="spacingAndGlyphs">DOWNLOAD</text>
<circle cx="81.7" cy="385.3" r="10.8" fill="#e2575c"/><circle cx="81.7" cy="385.3" r="10" fill="url(#gc)"/>
<path d="M79 377.6h5.4v7h3.6l-6.3 7.6-6.3-7.6h3.6z" fill="#ffffff"/>
<g stroke-linecap="round" stroke-linejoin="round">
<path d="M747.4 93.600c3.600-0.800 6.400 0.600 8.600 2.800c2.800 1 5.200 3 6.400 5.600c-1.600 1.400-2 3-1.600 5.200c-1 1.600-1.200 3.600-1.800 5.600c-1.800-2.600-3.600-5-6.200-6.800c0.800-1.600 1.800-2.800 3-3.600c-2.200-1.400-3.800-3.200-4.800-5.400c-1.200-1.200-2.400-2.200-3.600-3.400z" fill="#f6c62e" stroke="#d39a18" stroke-width="0.5"/>
<path d="M722 128.600l-6.600 7.400-3.600 5.400" fill="none" stroke="#2e8bd8" stroke-width="5.400"/>
<path d="M729.600 128.600l3.800 7.600 3.200 6" fill="none" stroke="#2e8bd8" stroke-width="5.400"/>
<path d="M713.400 138.400l-2.600 3.800" fill="none" stroke="#1d5fa8" stroke-width="5.600"/><path d="M735.200 139.200l2 3.800" fill="none" stroke="#1d5fa8" stroke-width="5.600"/>
<path d="M711.200 136.200l4.600 2.800M732.600 139.400l5-2" fill="none" stroke="#20242c" stroke-width="1"/>
<path d="M718.800 114.400c4-3 10-3.600 14.600-1.800l2.400 17.200c-5 3-13 3-18.400 0.800z" fill="#2f8fdc" stroke="#1b5c9e" stroke-width="0.500"/>
<path d="M725.600 112.400l1.400 18.600" stroke="#1b5c9e" stroke-width="0.700" fill="none"/><path d="M718 125.600c5 1.400 12 1.400 17.400-0.400" stroke="#1b5c9e" stroke-width="0.600" fill="none"/>
<path d="M696.600 126.400L754.600 104.400" stroke="#6e3f1c" stroke-width="2.600"/><path d="M696.600 126.200L754.600 104.200" stroke="#a8692f" stroke-width="1.400"/>
<path d="M720.200 115l-7.400 3.400-2 3.800" fill="none" stroke="#2f8fdc" stroke-width="4.200"/>
<path d="M733 114.400l5.200 1.400 2.200-4.600" fill="none" stroke="#2f8fdc" stroke-width="4.200"/>
<circle cx="710.400" cy="122.400" r="2.100" fill="#f2bd95" stroke="#8a5a3a" stroke-width="0.300"/><circle cx="740.600" cy="110.200" r="2.100" fill="#f2bd95" stroke="#8a5a3a" stroke-width="0.300"/>
<path d="M713.400 97c-0.800 5 1.600 9.600 6 12c4 2.200 9.400 2.400 13.600 0.400c4.400-2.200 7.200-6.600 7-12.400z" fill="#f6c6a0" stroke="#8a5a3a" stroke-width="0.400"/>
<ellipse cx="739" cy="102.400" rx="1.600" ry="2.400" fill="#f0b48c" stroke="#8a5a3a" stroke-width="0.300"/>
<path d="M714.600 92c-0.400-4.600 0.600-8 2.600-10.400l1 3c1.200-3.400 3.400-5.600 6.400-6.800l0.200 2.600c2.800-2 6-2.600 9.200-2l-1.600 2c3.400 0.400 6.200 2.200 8 4.800l-2.400 0.200c1.800 2 2.600 4.200 2.800 6.600z" fill="#f5b21a" stroke="#c97a10" stroke-width="0.500"/>
<path d="M719 90.600c0.400-3.600 1.800-6.600 4.200-8.600M725.600 90.400c0.200-4 1.400-7.400 4-10M732.600 90.600c0.600-3 2-5.400 4.200-7.200" stroke="#fde36a" stroke-width="1.400" fill="none"/>
<path d="M722.400 90.400c0.400-3 1.400-5.600 3-7.600M729.400 90.400c0.400-3 1.600-5.800 3.600-7.800" stroke="#e88a12" stroke-width="0.800" fill="none"/>
<path d="M712.800 92c9-2.400 19.600-2.400 28.600-0.400l0.200 5.800c-9-2-19.600-2-28.600 0.600z" fill="#33363b"/>
<path d="M741.200 92.600c2.600-1.600 5-1.800 7.400-0.600l-2.600 1.800c1.800 0.400 3 1.400 3.600 3.200c-2.800-1.400-5.400-1.600-8-0.800z" fill="#2b2d31"/>
<path d="M714 94.400c9-2 18-2 26.600-0.200" stroke="#5a5e66" stroke-width="0.500" fill="none"/>
<ellipse cx="721" cy="100.800" rx="2.300" ry="1.700" fill="#ffffff" stroke="#3a2a20" stroke-width="0.300"/><ellipse cx="731.400" cy="100.600" rx="2.300" ry="1.700" fill="#ffffff" stroke="#3a2a20" stroke-width="0.300"/>
<circle cx="721.600" cy="101" r="1" fill="#2a2a2a"/><circle cx="730.800" cy="100.800" r="1" fill="#2a2a2a"/>
<path d="M718.200 98.800l5 1M734.400 98.600l-5 1" stroke="#3a2a20" stroke-width="0.700"/>
<path d="M722.600 106.400c2.400 1.600 5.600 1.400 8-0.800" stroke="#7a3a2a" stroke-width="0.700" fill="none"/><path d="M725.800 103.600l0.800 0.600" stroke="#b0785a" stroke-width="0.500"/>
</g>
<text fill="#2d8fd6" stroke="#2d8fd6" stroke-width="0.35" font-style="italic" font-family="Liberation Sans, Arial, sans-serif"><tspan x="680.4" y="156.6" font-size="18" textLength="11.4" lengthAdjust="spacingAndGlyphs">P</tspan><tspan x="692.4" y="161.6" dy="0 1.4 1 0.4 0.4" font-size="15" textLength="29.6" lengthAdjust="spacingAndGlyphs">islik</tspan><tspan x="723.2" y="164.2" font-size="18.5" textLength="15.6" lengthAdjust="spacingAndGlyphs">M</tspan><tspan x="739.6" y="162.8" dy="0 -1.2 -1.5 -2.6" font-size="14" textLength="35.4" lengthAdjust="spacingAndGlyphs">imar</tspan></text>
</svg>
</body></html>
